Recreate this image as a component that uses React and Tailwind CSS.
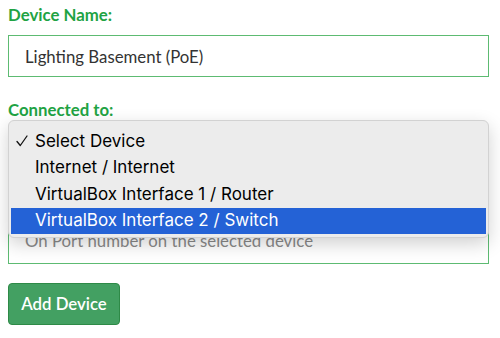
import React from 'react';

const options = [
    'Select Device',
    'Internet / Internet',
    'VirtualBox Interface 1 / Router',
    'VirtualBox Interface 2 / Switch',
];

const App = () => {
    return (
        <div className="w-[500px] h-[338px] bg-white overflow-hidden font-['Lato',sans-serif]">
            <form className="relative flex flex-col px-2 pt-[3px]">
                <label className="text-[16.8px] leading-[24px] font-bold text-[#1fa344]">Device Name:</label>
                <input
                    readOnly
                    value="Lighting Basement (PoE)"
                    className="mt-[8px] h-[42px] w-[481px] border border-[#5dbb72] px-4 text-[16.8px] text-[#333] outline-none"
                />

                <label className="mt-[21px] text-[16.8px] leading-[24px] font-bold text-[#1fa344]">Connected to:</label>
                <div className="relative mt-[4px] h-[42px] w-[481px] border border-[#5dbb72]" />

                <label className="mt-[16px] text-[16.8px] leading-[24px] font-bold text-[#1fa344]">Port:</label>
                <input
                    readOnly
                    placeholder="On Port number on the selected device"
                    className="mt-[10px] h-[46px] w-[481px] border border-[#5dbb72] px-4 pb-[2px] text-[16.8px] text-[#333] placeholder:text-[#8a8a8a] outline-none"
                />

                <button
                    type="button"
                    className="mt-[19px] h-[42px] w-[112px] rounded-[4px] border border-[#2e8a47] bg-[#43a062] text-[16.8px] font-semibold text-white"
                >
                    Add Device
                </button>

                {/* native select popup */}
                <div className="absolute left-2 top-[120px] w-[481px] h-[118px] rounded-[6px] border border-[#d2d2d2] bg-[#ececec] shadow-[0_6px_18px_rgba(0,0,0,0.18)] px-[2px] pt-[7px] font-['Inter',sans-serif] text-[17px] text-black">
                    {options.map((opt, i) => {
                        const active = i === 3;
                        return (
                            <div
                                key={opt}
                                className={
                                    active
                                        ? 'flex h-[26px] items-center bg-[#2462d6] text-white'
                                        : 'flex h-[26.5px] items-center'
                                }
                            >
                                <span className="flex w-[24px] pl-[5px]">
                                    {i === 0 && (
                                        <svg width="12" height="12" viewBox="0 0 12 12" fill="none">
                                            <path d="M1 6.5 L4.3 10.5 L11 1" stroke="#111" strokeWidth="1.3" strokeLinecap="round" strokeLinejoin="round" />
                                        </svg>
                                    )}
                                </span>
                                <span>{opt}</span>
                            </div>
                        );
                    })}
                </div>
            </form>
        </div>
    );
};

export default App;
